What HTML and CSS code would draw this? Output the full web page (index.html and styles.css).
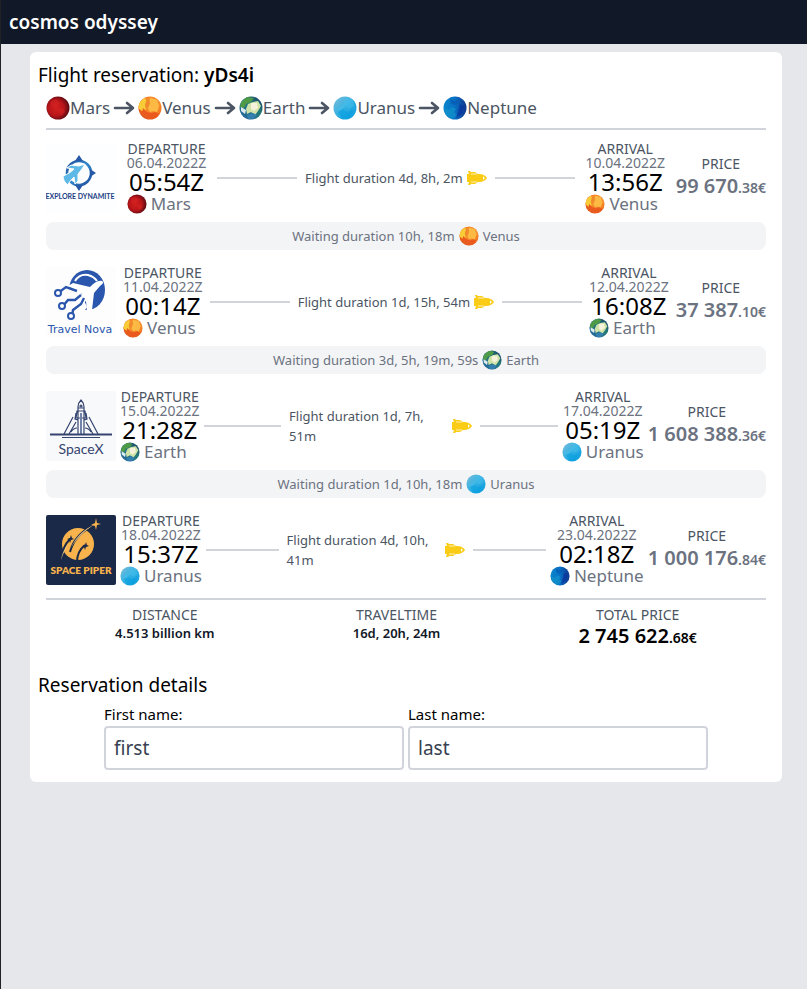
FILE: index.html
```html
<!DOCTYPE html>
<html lang="en">
<head>
<meta charset="utf-8">
<meta name="viewport" content="width=device-width, initial-scale=1">
<title>cosmos odyssey</title>
<link rel="stylesheet" href="styles.css">
</head>
<body>
<svg class="sprite" aria-hidden="true">
  <defs>
    <radialGradient id="g-mars" cx=".42" cy=".5" r=".6"><stop offset="0" stop-color="#d3201f"/><stop offset=".55" stop-color="#b91519"/><stop offset="1" stop-color="#4f0a12"/></radialGradient>
    <radialGradient id="g-venus" cx=".6" cy=".35" r=".7"><stop offset="0" stop-color="#fbb43c"/><stop offset=".6" stop-color="#f47b24"/><stop offset="1" stop-color="#dc4b18"/></radialGradient>
    <linearGradient id="g-earth" x1="0" y1="1" x2="1" y2="0"><stop offset="0" stop-color="#2462a5"/><stop offset=".6" stop-color="#247b75"/><stop offset="1" stop-color="#142c68"/></linearGradient>
    <linearGradient id="g-uranus" x1="0" y1="0" x2="1" y2="1"><stop offset="0" stop-color="#83bfd9"/><stop offset=".5" stop-color="#30b0e3"/><stop offset="1" stop-color="#0798dc"/></linearGradient>
    <linearGradient id="g-neptune" x1="0" y1="0" x2="1" y2="0"><stop offset="0" stop-color="#0b87cc"/><stop offset=".5" stop-color="#0870c5"/><stop offset="1" stop-color="#103289"/></linearGradient>
    <linearGradient id="g-blue" x1="0" y1="0" x2="1" y2="1"><stop offset="0" stop-color="#1e4c9b"/><stop offset=".5" stop-color="#3188cc"/><stop offset="1" stop-color="#1e4c9b"/></linearGradient>
    <clipPath id="disc"><circle cx="12" cy="12" r="11.5"/></clipPath>
  </defs>
  <symbol id="mars" viewBox="0 0 24 24"><circle cx="12" cy="12" r="11.5" fill="url(#g-mars)"/><path d="M5 5l5-2 4 4-4 4-5-1zM12 14l5-2 2 4-4 4z" fill="#e32b27" opacity=".35"/></symbol>
  <symbol id="venus" viewBox="0 0 24 24"><g clip-path="url(#disc)"><path d="M0 0h24v24H0z" fill="url(#g-venus)"/><path d="M1 6l6-4 2 3-2 4 1 5-4 1-4-3z" fill="#f7cc36"/><path d="M12 2l7 2 2 6-2 6-4-1-3 1-2-4 2-4z" fill="#fcb944"/><path d="M5 12l4 4 4 1 4-1 4 2-3 4-7 1-7-6z" fill="#ea5a1e"/><path d="M10 2l2 5-2 5-3-2 1-5z" fill="#f08a2c"/></g></symbol>
  <symbol id="earth" viewBox="0 0 24 24"><g clip-path="url(#disc)"><path d="M0 0h24v24H0z" fill="url(#g-earth)"/><path d="M2 6l6-5 7 1-3 4-5 2-2 4-4-1z" fill="#4e9a46"/><path d="M9 8l5-2 5-1 3 5-3 5-3 4-4-3-4 2-1-5z" fill="#cfe3a8"/><path d="M12 7l6 0 1 5-4 3-3-2z" fill="#f5f1db"/><path d="M2 11l5 3-1 4-4-3z" fill="#dcebed"/><path d="M8 19l6-2 4 2-4 4H9z" fill="#347fae"/></g></symbol>
  <symbol id="uranus" viewBox="0 0 24 24"><g clip-path="url(#disc)"><path d="M0 0h24v24H0z" fill="url(#g-uranus)"/><path d="M12 1l7 2 2 7-5 3-4-3-3 4-6 1 4-5 4-2z" fill="#4bc1ec" opacity=".45"/><path d="M5 16l5-3 4 3 6-2-3 8-8 1z" fill="#009de0" opacity=".5"/></g></symbol>
  <symbol id="neptune" viewBox="0 0 24 24"><g clip-path="url(#disc)"><path d="M0 0h24v24H0z" fill="url(#g-neptune)"/><path d="M2 13l4 1 3-3 4 2-2 3 3 3-5 4-6-4z" fill="#1498ca" opacity=".6"/><path d="M7 3l5 2 4-1-3 5-5-1z" fill="#065ab4" opacity=".7"/><path d="M17 8l4 2-2 8-6 4 2-6z" fill="#092e9c" opacity=".6"/></g></symbol>
  <symbol id="arrow" viewBox="0 0 22 16"><path d="M2 8h18M14 3l6 5-6 5" fill="none" stroke="#4b5563" stroke-width="2.6" stroke-linecap="round" stroke-linejoin="round"/></symbol>
  <symbol id="rocket" viewBox="0 0 20 14"><path d="M0 3h4v8H0z" fill="#facc15"/><path fill="#facc15" fill-rule="evenodd" d="M4 3h8c4 0 7 2 8 4-1 2-4 4-8 4H4zM16 5.500v3a1.500 1.500 0 0 0 0-3z"/><path d="M1 0h2l1 1h4l3 2H2zM1 14h2l1-1h4l3-2H2z" fill="#facc15"/><path d="M4 3h6M4 11h6" stroke="#fff" stroke-width=".7"/></symbol>
</svg>

<header class="topbar"><a class="brand" href="#">cosmos odyssey</a></header>

<main class="card">
  <h1 class="title">Flight reservation: <b>yDs4i</b></h1>

  <section class="trip">
    <div class="route">
      <svg class="globe"><use href="#mars"/></svg><span>Mars</span><svg class="arrow"><use href="#arrow"/></svg>
      <svg class="globe"><use href="#venus"/></svg><span>Venus</span><svg class="arrow"><use href="#arrow"/></svg>
      <svg class="globe"><use href="#earth"/></svg><span>Earth</span><svg class="arrow"><use href="#arrow"/></svg>
      <svg class="globe"><use href="#uranus"/></svg><span>Uranus</span><svg class="arrow"><use href="#arrow"/></svg>
      <svg class="globe"><use href="#neptune"/></svg><span>Neptune</span>
    </div>

    <div class="legs">
      <article class="leg">
        <svg class="logo" viewBox="0 0 70 70" role="img" aria-label="Explore Dynamite">
          <path d="M0 0h70v70H0z" fill="#fdfeff"/>
          <circle cx="33" cy="30" r="12" fill="none" stroke="url(#g-blue)" stroke-width="2.6"/>
          <path d="M29 18l4-6 4 6zM29 42l4 6 4-6zM44 26l6 4-6 4z" fill="#2559a8"/>
          <path d="M17 33c5-2 8-4 11-7l-7-1 4-3 8 1 6-2-3 5-4 5v7l-3 3-1-7c-3 3-5 5-6 8-3-2-5-5-5-9z" fill="#5fb9e6" stroke="#fff"/>
          <text x="34" y="56" class="logo-dynamite">EXPLORE DYNAMITE</text>
        </svg>
        <div class="stop"><span class="label">DEPARTURE</span><span class="date">06.04.2022Z</span><span class="time">05:54Z</span><span class="place"><svg class="planet"><use href="#mars"/></svg>Mars</span></div>
        <div class="flight"><i class="line"></i><div class="duration"><span>Flight duration 4d, 8h, 2m</span><svg class="rocket"><use href="#rocket"/></svg></div><i class="line"></i></div>
        <div class="stop"><span class="label">ARRIVAL</span><span class="date">10.04.2022Z</span><span class="time">13:56Z</span><span class="place"><svg class="planet"><use href="#venus"/></svg>Venus</span></div>
        <div class="price"><span class="label">PRICE</span><span class="amount">99 670<small>.38€</small></span></div>
      </article>
      <div class="wait"><span>Waiting duration 10h, 18m</span><svg class="planet"><use href="#venus"/></svg><span>Venus</span></div>

      <article class="leg">
        <svg class="logo" viewBox="0 0 70 70" role="img" aria-label="Travel Nova">
          <path d="M0 0h70v70H0z" fill="#fdfdfe"/>
          <ellipse cx="41" cy="23" rx="18" ry="20" fill="#2a56ad"/>
          <path d="M29 14c3-5 8-7 13-6 4 1 7 3 9 6" fill="none" stroke="#fff" stroke-width="2"/>
          <path d="M20 30l11 16 6 0 4-6-8-18-11 0z" fill="#fdfdfe"/>
          <path d="M56 14c-4-1-8 2-12 6l-17-4-5 3 14 8-7 7-7-2 2 7 8 3 2-3 6-5 1 12 5-3 2-17 6-7c3-2 4-4 2-5z" fill="#fff"/>
          <path d="M12 26l8-6 11 4M17 39l5-6h7l6-5M26 49l1-6 8-6 3-6" fill="none" stroke="#2a56ad" stroke-width="2.4"/>
          <g fill="#fff" stroke="#2a56ad" stroke-width="2"><circle cx="12" cy="26" r="3"/><circle cx="16" cy="39" r="3"/><circle cx="25" cy="49" r="3"/></g>
          <text x="34" y="66" class="logo-nova">Travel Nova</text>
        </svg>
        <div class="stop"><span class="label">DEPARTURE</span><span class="date">11.04.2022Z</span><span class="time">00:14Z</span><span class="place"><svg class="planet"><use href="#venus"/></svg>Venus</span></div>
        <div class="flight"><i class="line"></i><div class="duration"><span>Flight duration 1d, 15h, 54m</span><svg class="rocket"><use href="#rocket"/></svg></div><i class="line"></i></div>
        <div class="stop"><span class="label">ARRIVAL</span><span class="date">12.04.2022Z</span><span class="time">16:08Z</span><span class="place"><svg class="planet"><use href="#earth"/></svg>Earth</span></div>
        <div class="price"><span class="label">PRICE</span><span class="amount">37 387<small>.10€</small></span></div>
      </article>
      <div class="wait"><span>Waiting duration 3d, 5h, 19m, 59s</span><svg class="planet"><use href="#earth"/></svg><span>Earth</span></div>

      <article class="leg">
        <svg class="logo" viewBox="0 0 70 70" role="img" aria-label="SpaceX">
          <path d="M0 0h70v70H0z" fill="#f8f9fb"/>
          <g fill="none" stroke="#34436f" stroke-width="1.2"><path d="M32 44V16c0-3 1-5 3-7 2 2 3 4 3 7v28M32 17h6M31 20h8l1 7H30zM30 22l-1 6 3 1M40 22l1 6-3 1M27 26L18 43M43 26l9 17M30 31l-7 12M40 31l7 12M25 41c2-3 4-4 6-4M45 41c-2-3-4-4-6-4"/><circle cx="35" cy="15" r="1"/><path d="M35 22v22" stroke="#7182aa" stroke-width="2"/><path d="M4 43.500h62" stroke-width="2"/><path d="M16 46.500h38"/></g>
          <text x="35" y="63" class="logo-spacex">SpaceX</text>
        </svg>
        <div class="stop"><span class="label">DEPARTURE</span><span class="date">15.04.2022Z</span><span class="time">21:28Z</span><span class="place"><svg class="planet"><use href="#earth"/></svg>Earth</span></div>
        <div class="flight"><i class="line"></i><div class="duration"><span>Flight duration 1d, 7h, 51m</span><svg class="rocket"><use href="#rocket"/></svg></div><i class="line"></i></div>
        <div class="stop"><span class="label">ARRIVAL</span><span class="date">17.04.2022Z</span><span class="time">05:19Z</span><span class="place"><svg class="planet"><use href="#uranus"/></svg>Uranus</span></div>
        <div class="price"><span class="label">PRICE</span><span class="amount">1 608 388<small>.36€</small></span></div>
      </article>
      <div class="wait"><span>Waiting duration 1d, 10h, 18m</span><svg class="planet"><use href="#uranus"/></svg><span>Uranus</span></div>

      <article class="leg">
        <svg class="logo" viewBox="0 0 70 70" role="img" aria-label="Space Piper">
          <path d="M0 0h70v70H0z" fill="#1a2948"/>
          <circle cx="32" cy="29" r="16" fill="#f8b34c"/>
          <g fill="none" stroke="#1a2948" stroke-width="2"><path d="M24 37c3-12 10-20 24-27M16 44c0-8 3-15 8-20M31 47c0-8 3-13 8-17"/></g>
          <path d="M25 33c5-12 13-18 24-24-9 6-18 13-24 24M15 45c1-6 3-11 7-16-3 6-5 10-7 16" fill="#fbd08b"/>
          <path d="M50 3l1 5 4 1-4 1-1 5-1-4-4-1 4-2z" fill="#f8b34c"/>
          <path d="M25 20l1 3 2 1-3 1-1 3-1-3-2-1 3-1zM40 27l1 3 2 1-3 1-1 3-1-3-2-1 3-1z" fill="#1a2948"/>
          <text x="35" y="59" class="logo-piper">SPACE PIPER</text>
        </svg>
        <div class="stop"><span class="label">DEPARTURE</span><span class="date">18.04.2022Z</span><span class="time">15:37Z</span><span class="place"><svg class="planet"><use href="#uranus"/></svg>Uranus</span></div>
        <div class="flight"><i class="line"></i><div class="duration"><span>Flight duration 4d, 10h, 41m</span><svg class="rocket"><use href="#rocket"/></svg></div><i class="line"></i></div>
        <div class="stop"><span class="label">ARRIVAL</span><span class="date">23.04.2022Z</span><span class="time">02:18Z</span><span class="place"><svg class="planet"><use href="#neptune"/></svg>Neptune</span></div>
        <div class="price"><span class="label">PRICE</span><span class="amount">1 000 176<small>.84€</small></span></div>
      </article>
    </div>

    <div class="totals">
      <div class="total"><span class="label">DISTANCE</span><b>4.513 billion km</b></div>
      <div class="total"><span class="label">TRAVELTIME</span><b>16d, 20h, 24m</b></div>
      <div class="total"><span class="label">TOTAL PRICE</span><span class="amount sum">2 745 622<small>.68€</small></span></div>
    </div>
  </section>

  <h2 class="title">Reservation details</h2>
  <form class="details">
    <div class="field"><label for="first">First name:</label><input id="first" type="text" value="first"></div>
    <div class="field"><label for="last">Last name:</label><input id="last" type="text" value="last"></div>
  </form>
</main>
</body>
</html>
```
FILE: styles.css
```css
* { box-sizing: border-box; }
body {
  margin: 0;
  min-height: 100vh;
  border-left: 1px solid #1f2328;
  background: #e5e7eb;
  color: #000;
  font: 15px/24px "Noto Sans", sans-serif;
}
svg { display: block; flex: none; }
.sprite { position: absolute; width: 0; height: 0; }

.topbar { padding: 8px; background: #111827; }
.brand { display: block; color: #fff; font-size: 19px; line-height: 28px; font-weight: 600; text-decoration: none; }

.card { margin: 8px 25px 8px 29px; padding: 8px; background: #fff; border-radius: 6px; }
.title { margin: 0; font-size: 19px; line-height: 30px; font-weight: 400; }
.title b { font-weight: 600; }

.trip { margin: 0 8px 20px; }
.route { display: flex; align-items: center; height: 38px; padding-bottom: 2px; color: #4b5563; font-size: 17px; }
.globe { width: 24px; height: 24px; }
.arrow { width: 22px; height: 16px; margin: 0 3px; }

.legs { padding: 12px 0; border: solid #d1d5db; border-width: 2px 0; }
.leg { display: flex; align-items: center; justify-content: space-between; }
.logo { width: 70px; height: 70px; border-radius: 2px; }
.stop { display: flex; flex-direction: column; align-items: center; flex: none; margin: 0 4px; }
.label { color: #4b5563; font-size: 14px; line-height: 14px; }
.date { color: #6b7280; font-size: 14px; line-height: 14px; }
.time { font-size: 24px; line-height: 24px; }
.place { display: flex; gap: 4px; align-self: flex-start; color: #6b7280; font-size: 17px; line-height: 20px; }
.planet { width: 20px; height: 20px; }
.flight { display: flex; align-items: center; min-width: 0; }
.line { width: 80px; height: 2px; background: #d1d5db; }
.duration { display: flex; align-items: center; gap: 4px; margin: 0 8px; color: #4b5563; font-size: 13px; line-height: 20px; }
.rocket { width: 20px; height: 14px; }
.price { display: flex; flex-direction: column; align-items: center; flex: none; gap: 3px; }
.amount { color: #6b7280; font-size: 20px; line-height: 24px; font-weight: 600; white-space: nowrap; }
.amount small { font-size: 14px; }
.sum { color: #000; }
.wait { display: flex; align-items: center; justify-content: center; gap: 4px; height: 28px; margin: 8px 0 16px; border-radius: 8px; background: #f3f4f6; color: #6b7280; font-size: 13px; }

.totals { display: flex; justify-content: space-around; padding-top: 8px; }
.total { display: flex; flex-direction: column; align-items: center; gap: 2px; }
.total b { color: #111827; font-size: 13px; line-height: 18px; font-weight: 600; }

.details { display: flex; justify-content: center; gap: 4px; padding: 2px 0 4px; }
.field { display: flex; flex-direction: column; flex: 0 1 300px; }
.field input { width: 100%; height: 44px; padding: 0 8px; border: 2px solid #d1d5db; border-radius: 4px; background: #fff; color: #374151; font: 19px/28px "Noto Sans", sans-serif; }

.logo text { text-anchor: middle; font-family: Lato, sans-serif; }
.logo-dynamite { fill: #1c3f85; font-size: 7px; font-weight: 700; }
.logo text.logo-nova { fill: #2a56ad; font: 500 11px "DejaVu Sans", sans-serif; }
.logo-spacex { fill: #34436f; font-size: 14px; }
.logo-piper { fill: #f8b34c; font-size: 10px; font-weight: 800; }
```
